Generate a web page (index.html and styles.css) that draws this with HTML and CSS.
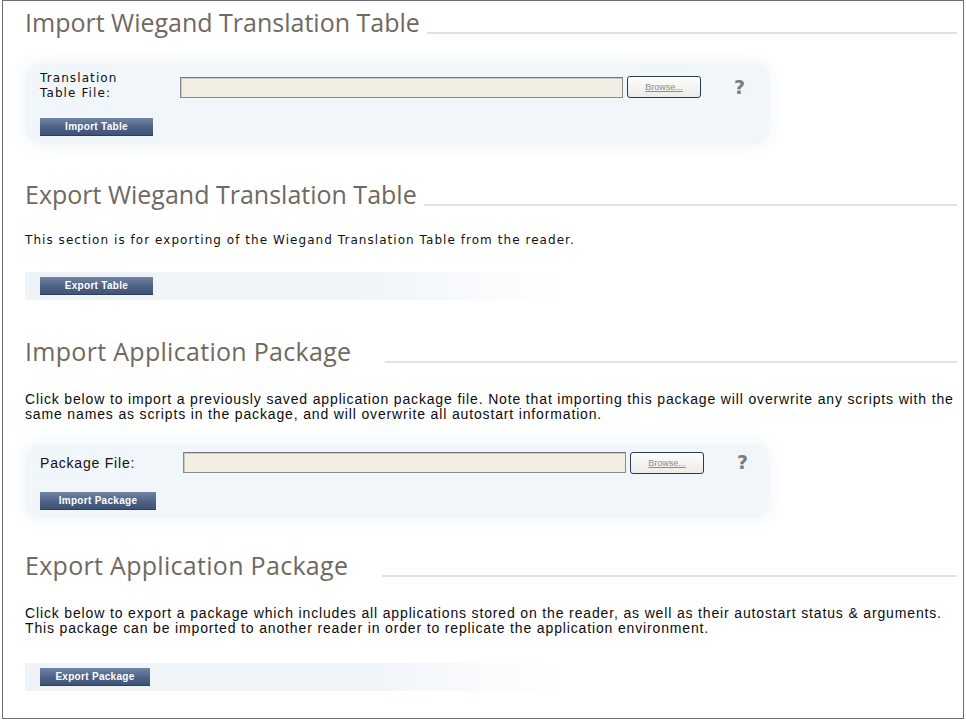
FILE: index.html
```html
<!DOCTYPE html>
<html>
  <head>
    <title>Application Packages</title>
    <link rel="stylesheet" href="styles.css">
  </head>
  <body>
    <div class="page">
      <section class="block first">
        <h2 class="title"><span>Import Wiegand Translation Table</span></h2>
        <div class="form-panel">
          <div class="field-row">
            <label class="field-label">Translation<br>Table File:</label>
            <div class="file-input"></div>
            <button class="browse">Browse...</button>
            <span class="help">?</span>
          </div>
          <button class="action">Import Table</button>
        </div>
      </section>

      <section class="block second">
        <h2 class="title"><span>Export Wiegand Translation Table</span></h2>
        <p class="intro">This section is for exporting of the Wiegand Translation Table from the reader.</p>
        <div class="action-strip">
          <button class="action">Export Table</button>
        </div>
      </section>

      <section class="block third">
        <h2 class="title short"><span>Import Application Package</span></h2>
        <p class="intro narrow">Click below to import a previously saved application package file. Note that importing this package will overwrite any scripts with the<br>same names as scripts in the package, and will overwrite all autostart information.</p>
        <div class="form-panel">
          <div class="field-row single">
            <label class="field-label narrow">Package File:</label>
            <div class="file-input"></div>
            <button class="browse">Browse...</button>
            <span class="help">?</span>
          </div>
          <button class="action">Import Package</button>
        </div>
      </section>

      <section class="block fourth">
        <h2 class="title short"><span>Export Application Package</span></h2>
        <p class="intro narrow">Click below to export a package which includes all applications stored on the reader, as well as their autostart status &amp; arguments.<br>This package can be imported to another reader in order to replicate the application environment.</p>
        <div class="action-strip wide">
          <button class="action">Export Package</button>
        </div>
      </section>
    </div>
  </body>
</html>
```

FILE: styles.css
```css
* {
  margin: 0;
  padding: 0;
  box-sizing: border-box;
}

html,
body {
  background: #fff;
}

body {
  font-family: "DejaVu Sans", Verdana, sans-serif;
  color: #111;
}

.page {
  margin-left: 2px;
  width: 962px;
  height: 719px;
  border: 1px solid #6f6f6f;
  padding: 6px 6px 0 22px;
  overflow: hidden;
}

.title {
  display: flex;
  align-items: flex-end;
  font-family: "Open Sans", "DejaVu Sans", sans-serif;
  font-weight: 400;
  font-size: 25px;
  line-height: 30px;
  color: #6f695f;
  white-space: nowrap;
}

.title span {
  padding-right: 7px;
}

.title.short span {
  padding-right: 34px;
  letter-spacing: 0.3px;
}

.title:after {
  content: "";
  flex: 1;
  height: 2px;
  background: #e1e1e1;
  margin-bottom: 3px;
}

.second {
  margin-top: 35px;
}

.third {
  margin-top: 36px;
}

.fourth {
  margin-top: 32px;
}

.form-panel {
  margin-top: 26px;
  width: 745px;
  padding: 8px 0 8px 15px;
  background: #f1f6fa;
  border-radius: 16px;
  box-shadow: 0 0 16px 6px #f5f8fb;
}

.third .form-panel {
  margin-top: 22px;
}

.field-row {
  display: flex;
  align-items: flex-start;
}

.field-label {
  width: 140px;
  font-size: 12px;
  line-height: 15px;
  letter-spacing: 1.1px;
  color: #111;
}

.field-label.narrow {
  width: 143px;
  font-family: "Liberation Sans", Arial, sans-serif;
  font-size: 14px;
  line-height: 22px;
  letter-spacing: 0.8px;
}

.file-input {
  margin-top: 6px;
  width: 443px;
  height: 21px;
  background: #f2eee4;
  border: 1px solid #8a8a8a;
  border-top-color: #777;
  box-shadow: inset 1px 1px 0 #c9c9c9;
}

.browse {
  margin: 5px 0 0 4px;
  width: 74px;
  height: 22px;
  background: linear-gradient(#fdfdfd, #ecebe6);
  border: 1px solid #2b3a55;
  border-radius: 3px;
  font-family: "Liberation Sans", Arial, sans-serif;
  font-size: 9px;
  color: #8c8c8c;
  text-decoration: underline;
}

.single .file-input,
.single .browse {
  margin-top: 0;
}

.help {
  margin: 6px 0 0 33px;
  font-family: "DejaVu Sans", sans-serif;
  font-weight: bold;
  font-size: 19px;
  line-height: 20px;
  color: #7c7c7c;
}

.single .help {
  margin-top: 0;
}

.action {
  display: block;
  height: 18px;
  padding: 0 14px;
  min-width: 113px;
  background: linear-gradient(#7185a5, #4d6287 55%, #3f5377);
  border: none;
  border-bottom: 1px solid #2e3d59;
  color: #fff;
  font-family: "Liberation Sans", Arial, sans-serif;
  font-weight: bold;
  font-size: 10px;
  letter-spacing: 0.3px;
}

.form-panel .action {
  margin-top: 17px;
}

.third .form-panel .action {
  margin-top: 18px;
  min-width: 116px;
}

.intro {
  margin-top: 24px;
  font-size: 12px;
  line-height: 15px;
  letter-spacing: 1.05px;
}

.intro.narrow {
  font-family: "Liberation Sans", Arial, sans-serif;
  font-size: 14px;
  letter-spacing: 0.85px;
  margin-top: 26px;
  color: #0c0c0c;
}

.action-strip {
  margin-top: 24px;
  width: 545px;
  padding: 5px 0 5px 15px;
  background: linear-gradient(to right, #eff4f9 60%, rgba(239, 244, 249, 0));
}

.action-strip.wide {
  margin-top: 27px;
}

.action-strip.wide .action {
  min-width: 110px;
}
```
